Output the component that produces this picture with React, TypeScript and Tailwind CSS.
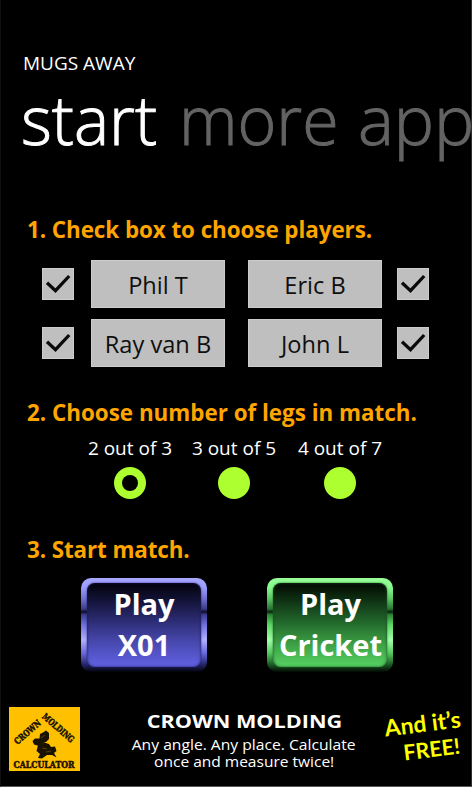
import React, { useState } from 'react';

const headingStyle = "ml-[26px] text-[22.4px] leading-[30px] font-bold text-[#ffa500] whitespace-nowrap";

function CheckBox(){

    const [isChecked, setChecked] = useState<boolean>(true);

    return (
        <button
            className="w-8 h-8 bg-[#bfbfbf] border border-[#cccccc]"
            onClick={() => { setChecked(!isChecked); }}
        >
            { isChecked ? (
                <svg viewBox="0 0 30 30" className="block w-[30px] h-[30px]">
                    <path d="M4 13.8 L12.5 21.700 L26.200 7" fill="none" stroke="#0a0a0a" strokeWidth="3.3" />
                </svg>
            ) : null
            }
        </button>
    )
}

function Player({ name }: { name: string }){
    return (
        <button className="w-[134px] h-12 bg-[#bfbfbf] border border-[#cccccc] text-[#0f0f0f] text-[23.6px] leading-[48px] whitespace-nowrap">
            {name}
        </button>
    )
}

function Legs({ label, isOn, onPick }: { label: string, isOn: boolean, onPick: () => void }){
    return (
        <button className="flex flex-col items-center w-[85px]" onClick={onPick}>
            <span className="pl-[1px] text-[19px] leading-[24px] text-white whitespace-nowrap">{label}</span>
            <span className="flex items-center justify-center mt-[7px] w-8 h-8 rounded-full bg-[#adff2f]">
                { isOn ? <span className="w-4 h-4 rounded-full bg-black"></span> : null }
            </span>
        </button>
    )
}

function Logo(){
    return (
        <svg viewBox="0 0 71 64" className="w-[71px] h-16 bg-[#ffc000]">
            <g fill="#1a1200" stroke="#1a1200" strokeWidth="0.5" fontFamily="'DejaVu Serif', serif" fontWeight="700" fontSize="9">
                <text transform="translate(8.500 38) rotate(-41)" textLength="32" lengthAdjust="spacingAndGlyphs">CROWN</text>
                <text transform="translate(32.500 10.500) rotate(41)" textLength="39" lengthAdjust="spacingAndGlyphs">MOLDING</text>
                <text x="4.5" y="60.500" fontSize="8.5" textLength="61" lengthAdjust="spacingAndGlyphs">CALCULATOR</text>
            </g>
            <g fill="#1a1200">
                <path d="M31 27 L34 25.500 L37 23.500 L40 26 L40 32 L37 35 L34 36 L30 39 L25 37.500 L23.500 34 L26 31.500 L30.500 31.500 Z" />
                <path d="M29 38 L35 35.500 L40 37 L42 40 L46 39.500 L47.500 44 L45 46 L47.500 50.500 L43 48 L38 48 L33 51.500 L29 51 L31 47 L27.500 44 Z" />
            </g>
            <path d="M32 31 L36 28 M33 41 L38 42 M37 45 L42 44" stroke="#7a6010" strokeWidth="0.6" />
        </svg>
    )
}

export default function App(){

    const [legs, setLegs] = useState<number>(0);

    return (
        <div className="flex flex-col w-[472px] h-[787px] overflow-hidden bg-black text-white
                        border-l border-l-[#101010] border-r border-r-[#303030] border-b border-b-[#5c5658]
                        font-['Open_Sans','Noto_Sans',sans-serif]">

            <div className="pt-[52px] pl-[22px] text-[19px] leading-[22px]">MUGS AWAY</div>

            <div className="flex w-[600px] pl-5 text-[69px] leading-[88px] font-light whitespace-nowrap [-webkit-text-stroke:1px]">
                <div className="w-[158px] origin-left scale-x-[0.96]">start</div>
                <div className="w-[179px] origin-left scale-x-[0.96] text-[#636363]">more</div>
                <div className="origin-left scale-x-[0.98] text-[#636363]">app</div>
            </div>

            <div className={`${headingStyle} mt-[53px] tracking-[-0.06px]`}>1. Check box to choose players.</div>

            <div className="flex flex-col gap-[11px] mt-[15px] pl-[41px]">
                <div className="flex items-center">
                    <CheckBox />
                    <div className="flex gap-[23px] ml-[17px] mr-[15px]">
                        <Player name="Phil T" />
                        <Player name="Eric B" />
                    </div>
                    <CheckBox />
                </div>
                <div className="flex items-center">
                    <CheckBox />
                    <div className="flex gap-[23px] ml-[17px] mr-[15px]">
                        <Player name="Ray van B" />
                        <Player name="John L" />
                    </div>
                    <CheckBox />
                </div>
            </div>

            <div className={`${headingStyle} mt-[31px]`}>2. Choose number of legs in match.</div>

            <div className="flex mt-[8px] ml-[86px]">
                <Legs label="2 out of 3" isOn={legs === 0} onPick={() => { setLegs(0); }} />
                <div className="ml-[19px] mr-[21px]">
                    <Legs label="3 out of 5" isOn={legs === 1} onPick={() => { setLegs(1); }} />
                </div>
                <Legs label="4 out of 7" isOn={legs === 2} onPick={() => { setLegs(2); }} />
            </div>

            <div className={`${headingStyle} mt-[36px] tracking-[-0.1px]`}>3. Start match.</div>

            <div className="flex gap-[60px] mt-[13px] ml-[80px] text-[29px] leading-[41px] font-bold text-center">
                <button className="w-[126px] h-[94px] px-[6px] pt-[5px] pb-[5px] rounded-[10px]
                                   bg-[linear-gradient(180deg,#a8a8ff_0%,#9c9cff_10%,#7070d0_22%,#3c3c88_33%,#0c0c24_36%,#3c3c90_39%,#7070e0_50%,#b0b0ff_66%,#6868dc_80%,#25256c_92%,#020208_100%)]">
                    <div className="h-[84px] rounded-[8px] shadow-[inset_0_0_3px_#1c1c58,0_0_2px_#202060]
                                    bg-[linear-gradient(180deg,#020208_0%,#14143c_22%,#2c2c74_45%,#4646aa_68%,#6262e6_100%)]">
                        <div>Play<br />X01</div>
                    </div>
                </button>
                <button className="w-[126px] h-[94px] px-[6px] pt-[5px] pb-[5px] rounded-[10px]
                                   bg-[linear-gradient(180deg,#98ff98_0%,#86fa8c_10%,#5cc464_22%,#287430_33%,#082010_36%,#2c8434_39%,#5cd864_50%,#a0ffa8_66%,#54c85e_80%,#1c5c24_92%,#020802_100%)]">
                    <div className="h-[84px] rounded-[8px] shadow-[inset_0_0_3px_#185020,0_0_2px_#185820] whitespace-nowrap
                                    bg-[linear-gradient(180deg,#020802_0%,#103414_22%,#20642a_45%,#38963f_68%,#58d464_100%)]">
                        <div className="pl-[1px]">Play<br />Cricket</div>
                    </div>
                </button>
            </div>

            <div className="flex mt-[35px] pl-2">
                <Logo />
                <div className="flex flex-col items-center w-[240px] ml-[44px] whitespace-nowrap">
                    <div className="mt-[2px] text-[18px] leading-[24px] font-bold scale-x-[1.2]">CROWN MOLDING</div>
                    <div className="mt-[3px] text-[14.500px] leading-[17px] scale-x-[1.08]">Any angle. Any place. Calculate</div>
                    <div className="text-[14.500px] leading-[18px] scale-x-[1.07]">once and measure twice!</div>
                </div>
                <div className="mt-[3px] ml-[20px] w-[79px] font-['Lato',sans-serif] text-[23px] leading-[27px] font-bold
                                text-right text-[#ffff00] whitespace-nowrap -rotate-[7deg]">
                    <div>And it’s</div>
                    <div className="pr-[4px] text-[21.5px]">FREE!</div>
                </div>
            </div>
        </div>
    )
}
